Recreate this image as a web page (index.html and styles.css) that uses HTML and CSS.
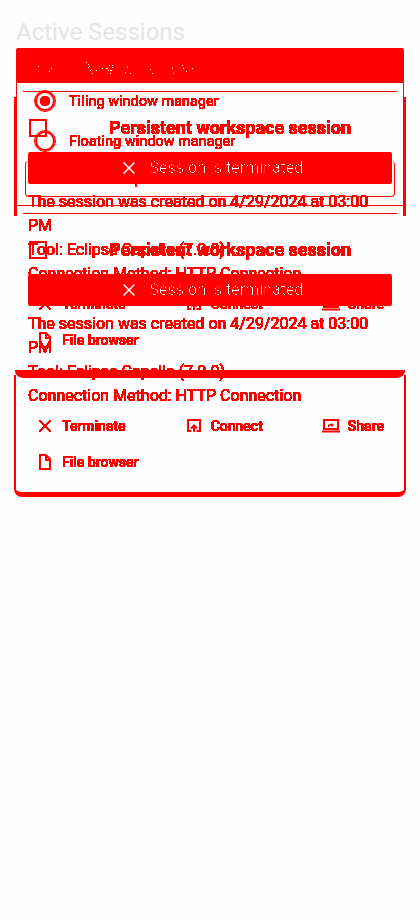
FILE: index.html
```html
<!DOCTYPE html>
<html lang="en">
<head>
<meta charset="utf-8">
<title>Active Sessions</title>
<link rel="stylesheet" href="styles.css">
</head>
<body>
<svg class="defs" width="0" height="0">
  <filter id="solid" x="-5%" y="-20%" width="110%" height="140%"><feComponentTransfer><feFuncA type="linear" slope="60" intercept="-1"/></feComponentTransfer></filter>
  <filter id="thin" x="-5%" y="-20%" width="110%" height="140%"><feComponentTransfer><feFuncA type="linear" slope="20" intercept="-18"/></feComponentTransfer></filter>
  <symbol id="close" viewBox="0 0 12 12"><path d="M.5.5l11 11M11.5.5l-11 11" fill="none" stroke="currentColor" stroke-width="1.5"/></symbol>
  <symbol id="open" viewBox="0 0 14 14"><path d="M4.500 12H1V1h12v11H9.500M7 13V7M4 9.500l3-3 3 3" fill="none" stroke="currentColor" stroke-width="2"/></symbol>
  <symbol id="share" viewBox="0 0 18 14"><path d="M2 1h14v9H2zM0 12.500h18" fill="none" stroke="currentColor" stroke-width="2"/><path d="M6 8V6q0-1 3-1V4l3 2-3 2V6.500H7.500V8z" fill="currentColor"/></symbol>
  <symbol id="file" viewBox="0 0 12 16"><path d="M1 1h6l4 4v10H1zM7 1v5h4" fill="none" stroke="currentColor" stroke-width="2"/></symbol>
</svg>
<main class="page">
  <h1 class="title">Active Sessions</h1>
  <div class="stack">
    <section class="options layer">
      <div class="banner">
        <svg width="388" height="35" viewBox="0 0 388 35" shape-rendering="crispEdges"><path fill="#fff" d="M22 18h1v1h-1zM35 20h1v1h-1zM33 23h1v1h-1zM70 14h1v1h-1zM72 16h1v1h-1zM73 18h1v1h-1zM72 19h1v1h-1zM74 22h1v1h-1zM76 25h1v1h-1zM80 22h1v1h-1zM86 20h1v1h-1zM90 20h2v1h-2zM93 17h1v1h-1zM96 17h1v1h-1zM92 22h1v1h-1zM94 22h2v1h-2zM96 19h1v1h-1zM94 25h1v1h-1zM111 19h1v1h-1zM109 24h1v1h-1zM114 25h1v1h-1zM134 21h1v1h-1zM136 25h1v1h-1zM156 20h1v1h-1zM157 25h1v1h-1zM166 17h1v1h-1zM167 20h1v1h-1zM170 23h1v1h-1zM176 20h1v1h-1z"/></svg>
      </div>
      <div class="choices">
        <label class="choice"><i class="radio on"></i><span class="ink">Tiling window manager</span></label>
        <label class="choice"><i class="radio"></i><span class="ink">Floating window manager</span></label>
        <div class="field"></div>
      </div>
    </section>
    <article class="card first layer">
      <div class="head"><i class="box"></i><h2 class="ink">Persistent workspace session</h2></div>
      <div class="status"><svg width="12" height="12"><use href="#close"/></svg><span>Session is terminated</span></div>
      <p class="ink">The session was created on 4/29/2024 at 03:00 PM<br>Tool: Eclipse Capella (7.0.0)<br>Connection Method: HTTP Connection</p>
      <div class="actions">
        <span class="action"><svg class="ink" width="12" height="12"><use href="#close"/></svg><b class="ink">Terminate</b></span>
        <span class="action"><svg width="14" height="14"><use href="#open"/></svg><b class="ink">Connect</b></span>
        <span class="action share"><svg width="18" height="14"><use href="#share"/></svg><b class="ink">Share</b></span>
      </div>
      <div class="actions"><span class="action"><svg width="12" height="16"><use href="#file"/></svg><b class="ink">File browser</b></span></div>
    </article>
    <article class="card second layer">
      <div class="head"><i class="box"></i><h2 class="ink">Persistent workspace session</h2></div>
      <div class="status"><svg width="12" height="12"><use href="#close"/></svg><span>Session is terminated</span></div>
      <p class="ink">The session was created on 4/29/2024 at 03:00 PM<br>Tool: Eclipse Capella (7.0.0)<br>Connection Method: HTTP Connection</p>
      <div class="actions">
        <span class="action"><svg class="ink" width="12" height="12"><use href="#close"/></svg><b class="ink">Terminate</b></span>
        <span class="action"><svg width="14" height="14"><use href="#open"/></svg><b class="ink">Connect</b></span>
        <span class="action share"><svg width="18" height="14"><use href="#share"/></svg><b class="ink">Share</b></span>
      </div>
      <div class="actions"><span class="action"><svg width="12" height="16"><use href="#file"/></svg><b class="ink">File browser</b></span></div>
    </article>
    <div class="edges layer"><div class="upper"><div class="base"></div></div><div class="lower"></div></div>
  </div>
</main>
</body>
</html>
```

FILE: styles.css
```css
* { box-sizing: border-box; }
body { margin: 0; background: #fefefe; color: #f00; font-family: Roboto, sans-serif; font-size: 16px; line-height: 24px; }
.defs { display: block; }
.page { height: 920px; overflow: hidden; padding: 16px 14px 0; }
.title { margin: 0; padding-left: 2px; height: 32px; line-height: 32px; font-size: 24px; font-weight: 400; color: #e5e5e5; }
.stack { display: grid; grid-template-columns: 392px; align-items: start; }
.layer { grid-area: 1 / 1; }
.ink { filter: url(#solid); }

.options { margin: 0 2px; height: 158px; border-bottom: 1px solid #f00; }
.banner { height: 35px; background: #f00; border-radius: 2px; }
.banner svg { display: block; }
.choices { padding: 8px 9px 0; }
.choice { display: flex; align-items: center; gap: 14px; height: 20px; margin-bottom: 20px; padding-left: 10px; font-size: 14px; letter-spacing: .25px; }
.radio { width: 20px; height: 20px; border: 2.500px solid #f00; border-radius: 50%; outline: .5px solid #f00; outline-offset: -.5px; }
.radio.on { background: radial-gradient(circle, #f00 5px, transparent 5.5px); }
.field { height: 36px; margin-top: -10px; border: 1px solid #f00; border-top: 0; border-radius: 4px; width: 370px; }

.card { padding: 20px 14px 0; height: 400px; }
.first { margin-top: 47px; }
.second { margin-top: 169px; }
.head { display: flex; align-items: center; height: 26px; }
.box { width: 18px; height: 18px; margin-left: 1px; border: 2px solid #f00; }
.head h2 { flex: 1; margin: 0 0 0 21px; text-align: center; font-size: 18px; font-weight: 700; line-height: 26px; white-space: nowrap; }
.status { display: flex; align-items: center; justify-content: center; gap: 15px; height: 32px; margin-top: 11px; padding-left: 6px; background: #f00; border-radius: 2px; color: #fff; }
.status span { filter: url(#thin); }
.card p { margin: 6px 0 0; height: 96px; }
.actions { display: flex; justify-content: space-between; height: 36px; padding: 0 8px; }
.action { display: flex; align-items: center; gap: 11px; height: 36px; font-size: 14px; }
.action svg { margin-left: 3px; }
.action:nth-child(2) { gap: 10px; padding-left: 2px; }
.action.share { gap: 8px; }
.action b { font-weight: 500; }

.edges { display: grid; grid-template-rows: 331px 118px; height: 449px; }
.upper { display: grid; align-items: end; background:
  linear-gradient(#f00, #f00) 121px 136px / 2px 3px no-repeat,
  linear-gradient(#f00, #f00) 9px 43px / 374px 1px no-repeat,
  linear-gradient(#f00, #f00) 9px 165px / 374px 1px no-repeat,
  linear-gradient(#f00, #f00) 2px 34px / 1px 17px no-repeat,
  linear-gradient(#f00, #f00) 389px 34px / 1px 17px no-repeat,
  linear-gradient(#f00, #f00) 0 49px / 3px 119px no-repeat,
  linear-gradient(#f00, #f00) 389px 49px / 3px 119px no-repeat; }
.base { height: 8px; margin: 0 1px 1px; background: #f00; border-radius: 0 0 9px 9px / 0 0 7px 7px; }
.lower { border: solid #f00; border-width: 0 2px 5px; border-radius: 0 0 8px 8px; margin-top: -4px; }
```
